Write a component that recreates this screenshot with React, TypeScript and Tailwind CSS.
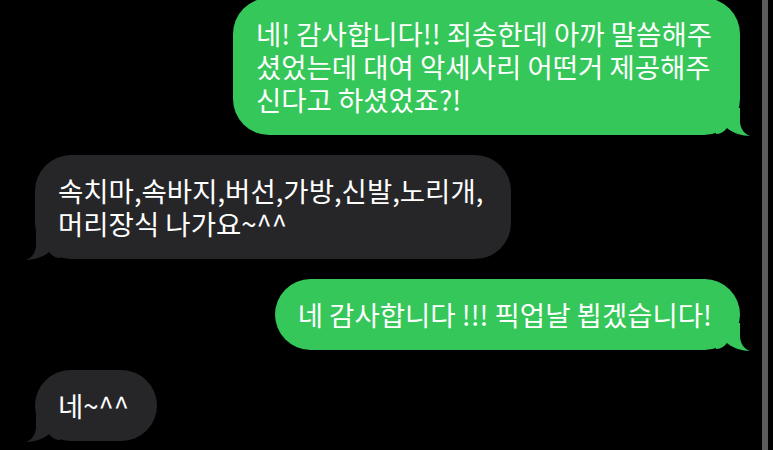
import React from 'react';

type Side = 'me' | 'them';

interface Message {
  side: Side;
  lines: string[];
}

const messages: Message[] = [
  {
    side: 'me',
    lines: [
      '네! 감사합니다!! 죄송한데 아까 말씀해주',
      '셨었는데 대여 악세사리 어떤거 제공해주',
      '신다고 하셨었죠?!',
    ],
  },
  {
    side: 'them',
    lines: ['속치마,속바지,버선,가방,신발,노리개,', '머리장식 나가요~^^'],
  },
  {
    side: 'me',
    lines: ['네 감사합니다 !!! 픽업날 뵙겠습니다!'],
  },
  {
    side: 'them',
    lines: ['네~^^'],
  },
];

function Tail({ side }: { side: Side }) {
  if (side === 'me') {
    return (
      <svg width="34" height="28" viewBox="0 0 34 28" className="absolute -right-[10px] -bottom-px">
        <path d="M24 0 L24 13 C24 20 28 26 34 28 C27 28 16 25 11 20 C8 24 4 26 0 26 L0 0 Z" fill="#35c759" />
      </svg>
    );
  }
  return (
    <svg width="34" height="28" viewBox="0 0 34 28" className="absolute -left-[9px] -bottom-px">
      <path d="M10 0 L10 13 C10 20 6 26 0 28 C7 28 18 25 23 20 C26 24 30 26 34 26 L34 0 Z" fill="#262629" />
    </svg>
  );
}

function Bubble({ side, lines }: Message) {
  const isMe = side === 'me';
  return (
    <div className={`flex ${isMe ? 'justify-end' : 'justify-start'}`}>
      <div
        className={`relative rounded-[36px] py-[19px] pl-[23px] pr-[28px] text-white ${
          isMe ? 'bg-[#35c759]' : 'bg-[#262629]'
        }`}
      >
        <Tail side={side} />
        <div className="relative">
          {lines.map((line, i) => (
            <div key={i} className="whitespace-nowrap">
              {line}
            </div>
          ))}
        </div>
      </div>
    </div>
  );
}

export default function App() {
  return (
    <div className="flex h-[450px] w-[773px] overflow-hidden bg-black font-['Noto_Sans_CJK_KR',sans-serif] text-[27.5px] leading-[33px]">
      <div className="flex flex-1 flex-col gap-5 pl-[35px] pr-[22px] -mt-[2px]">
        {messages.map((m, i) => (
          <Bubble key={i} {...m} />
        ))}
      </div>
      <div className="w-[6px] bg-[#5c5c5c]" />
      <div className="w-[5px]" />
    </div>
  );
}
